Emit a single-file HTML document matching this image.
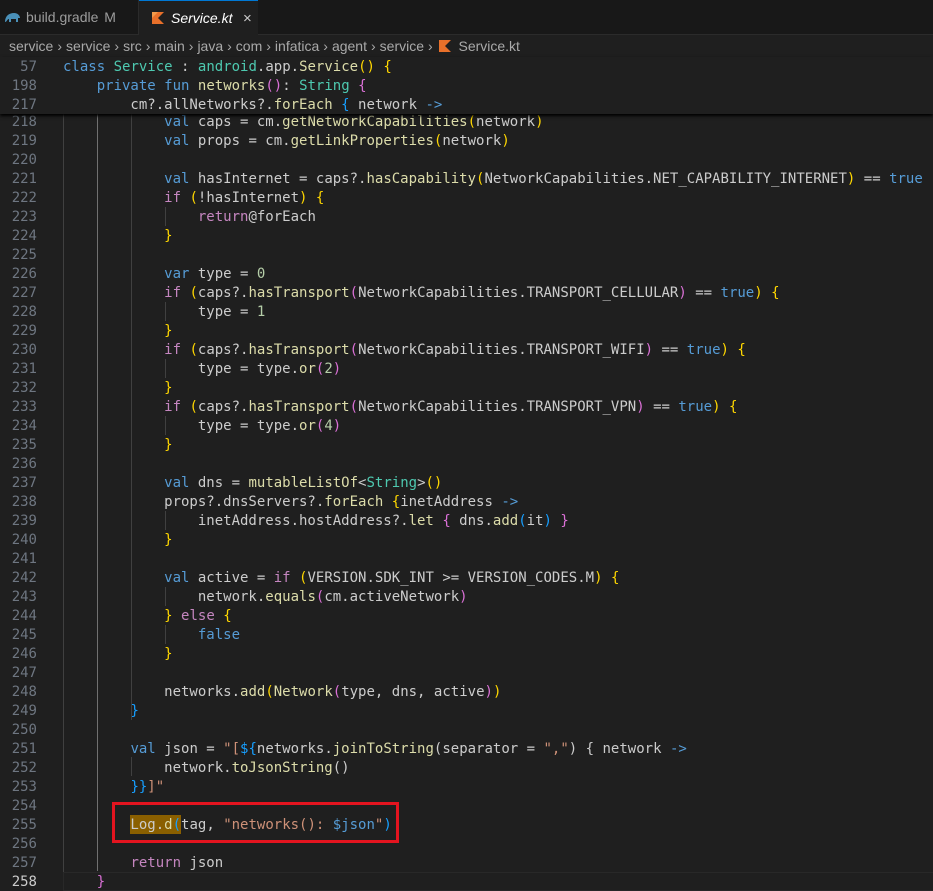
<!DOCTYPE html>
<html><head><meta charset="utf-8"><style>
*{margin:0;padding:0;box-sizing:border-box}
html,body{width:933px;height:891px;overflow:hidden;background:#1f1f1f}
body{position:relative;font-family:"DejaVu Sans Mono","Liberation Mono",monospace;font-size:14px;color:#cccccc}
.tabs{position:absolute;left:0;top:0;width:933px;height:35px;background:#181818;border-bottom:1px solid #2b2b2b}
.tab{position:absolute;top:0;height:35px;font-family:"Liberation Sans",sans-serif;font-size:14px;line-height:35px}
.crumb{position:absolute;left:0;top:35px;width:933px;height:22px;font-family:"Liberation Sans",sans-serif;font-size:14px;color:#a9a9a9;line-height:22px;padding-left:9px;white-space:pre}
.crumb i{font-style:normal;padding:0 4px 0 4px}
.ln{position:absolute;left:0;width:37px;text-align:right;color:#6e7681;height:20px;line-height:19px;padding-top:1px}
.cd{position:absolute;left:63px;height:20px;line-height:19px;padding-top:1px;white-space:pre}
.g{position:absolute;width:1px;background:#404040}
.k{color:#569cd6}.c{color:#c586c0}.f{color:#dcdcaa}.t{color:#4ec9b0}.s{color:#ce9178}.n{color:#b5cea8}
.y{color:#ffd700}.o{color:#da70d6}.b{color:#179fff}
</style></head><body>
<div class="tabs">
 <div class="tab" style="left:0;width:139px;color:#9d9d9d;padding-left:26px;border-right:1px solid #2b2b2b">build.gradle <span style="margin-left:2px">M</span>
  <svg style="position:absolute;left:4px;top:11px" width="17" height="13" viewBox="0 0 17 13"><path d="M1 11 C1 5 5 2 10 2 C14 2 16 5 16 7 L14 7 L14 11 L12 11 L12 8 L7 8 L7 11 L5 11 L5 8 C3 8 3 11 1 11Z" fill="#4a90b8"/></svg></div>
 <div class="tab" style="left:139px;width:119px;background:#1f1f1f;border-top:1px solid #0078d4;color:#ffffff;font-style:italic;padding-left:32px">Service.kt
  <svg style="position:absolute;left:13px;top:11px" width="12" height="12" viewBox="0 0 12 12"><path d="M0 0H12L6 6L12 12H0Z" fill="#e8702a"/><path d="M0 0H6L0 6Z" fill="#f39a4a"/></svg>
  <span style="position:absolute;left:104px;top:0;font-style:normal;color:#ccc;font-size:15px">×</span></div>
</div>
<div class="crumb">service<i>›</i>service<i>›</i>src<i>›</i>main<i>›</i>java<i>›</i>com<i>›</i>infatica<i>›</i>agent<i>›</i>service<i>›</i><svg width="12" height="12" viewBox="0 0 12 12" style="vertical-align:-1px;margin-left:2px"><path d="M0 0H12L6 6L12 12H0Z" fill="#e8702a"/></svg>  Service.kt</div>

<div class="g" style="left:63px;top:114px;height:777px"></div>
<div class="g" style="left:97px;top:114px;height:757px;background:#707070"></div>
<div class="g" style="left:131px;top:112px;height:608px"></div>
<div class="g" style="left:131px;top:757px;height:19px"></div>
<div class="g" style="left:165px;top:207px;height:19px"></div>
<div class="g" style="left:165px;top:302px;height:19px"></div>
<div class="g" style="left:165px;top:359px;height:19px"></div>
<div class="g" style="left:165px;top:416px;height:19px"></div>
<div class="g" style="left:165px;top:511px;height:19px"></div>
<div class="g" style="left:165px;top:587px;height:19px"></div>
<div class="g" style="left:165px;top:625px;height:19px"></div>

<div style="position:absolute;left:63px;top:872px;width:870px;height:19px;border:1px solid #282828;border-right:none"></div>
<div style="position:absolute;left:130px;top:815px;width:51px;height:19px;background:#8a5f00"></div>
<div style="position:absolute;left:112px;top:802px;width:287px;height:41px;border:3px solid #e3141f"></div>

<div id="code">
<div class="ln" style="top:112px">218</div><div class="cd" style="top:112px">            <span class="k">val</span> caps = cm.<span class="f">getNetworkCapabilities</span><span class="y">(</span>network<span class="y">)</span></div>
<div class="ln" style="top:131px">219</div><div class="cd" style="top:131px">            <span class="k">val</span> props = cm.<span class="f">getLinkProperties</span><span class="y">(</span>network<span class="y">)</span></div>
<div class="ln" style="top:150px">220</div>
<div class="ln" style="top:169px">221</div><div class="cd" style="top:169px">            <span class="k">val</span> hasInternet = caps?.<span class="f">hasCapability</span><span class="y">(</span>NetworkCapabilities.NET_CAPABILITY_INTERNET<span class="y">)</span> == <span class="k">true</span></div>
<div class="ln" style="top:188px">222</div><div class="cd" style="top:188px">            <span class="c">if</span> <span class="y">(</span>!hasInternet<span class="y">)</span> <span class="y">{</span></div>
<div class="ln" style="top:207px">223</div><div class="cd" style="top:207px">                <span class="c">return</span>@forEach</div>
<div class="ln" style="top:226px">224</div><div class="cd" style="top:226px">            <span class="y">}</span></div>
<div class="ln" style="top:245px">225</div>
<div class="ln" style="top:264px">226</div><div class="cd" style="top:264px">            <span class="k">var</span> type = <span class="n">0</span></div>
<div class="ln" style="top:283px">227</div><div class="cd" style="top:283px">            <span class="c">if</span> <span class="y">(</span>caps?.<span class="f">hasTransport</span><span class="o">(</span>NetworkCapabilities.TRANSPORT_CELLULAR<span class="o">)</span> == <span class="k">true</span><span class="y">)</span> <span class="y">{</span></div>
<div class="ln" style="top:302px">228</div><div class="cd" style="top:302px">                type = <span class="n">1</span></div>
<div class="ln" style="top:321px">229</div><div class="cd" style="top:321px">            <span class="y">}</span></div>
<div class="ln" style="top:340px">230</div><div class="cd" style="top:340px">            <span class="c">if</span> <span class="y">(</span>caps?.<span class="f">hasTransport</span><span class="o">(</span>NetworkCapabilities.TRANSPORT_WIFI<span class="o">)</span> == <span class="k">true</span><span class="y">)</span> <span class="y">{</span></div>
<div class="ln" style="top:359px">231</div><div class="cd" style="top:359px">                type = type.<span class="f">or</span><span class="o">(</span><span class="n">2</span><span class="o">)</span></div>
<div class="ln" style="top:378px">232</div><div class="cd" style="top:378px">            <span class="y">}</span></div>
<div class="ln" style="top:397px">233</div><div class="cd" style="top:397px">            <span class="c">if</span> <span class="y">(</span>caps?.<span class="f">hasTransport</span><span class="o">(</span>NetworkCapabilities.TRANSPORT_VPN<span class="o">)</span> == <span class="k">true</span><span class="y">)</span> <span class="y">{</span></div>
<div class="ln" style="top:416px">234</div><div class="cd" style="top:416px">                type = type.<span class="f">or</span><span class="o">(</span><span class="n">4</span><span class="o">)</span></div>
<div class="ln" style="top:435px">235</div><div class="cd" style="top:435px">            <span class="y">}</span></div>
<div class="ln" style="top:454px">236</div>
<div class="ln" style="top:473px">237</div><div class="cd" style="top:473px">            <span class="k">val</span> dns = <span class="f">mutableListOf</span>&lt;<span class="t">String</span>&gt;<span class="y">()</span></div>
<div class="ln" style="top:492px">238</div><div class="cd" style="top:492px">            props?.dnsServers?.<span class="f">forEach</span> <span class="y">{</span>inetAddress <span class="k">-&gt;</span></div>
<div class="ln" style="top:511px">239</div><div class="cd" style="top:511px">                inetAddress.hostAddress?.<span class="f">let</span> <span class="o">{</span> dns.<span class="f">add</span><span class="b">(</span>it<span class="b">)</span> <span class="o">}</span></div>
<div class="ln" style="top:530px">240</div><div class="cd" style="top:530px">            <span class="y">}</span></div>
<div class="ln" style="top:549px">241</div>
<div class="ln" style="top:568px">242</div><div class="cd" style="top:568px">            <span class="k">val</span> active = <span class="c">if</span> <span class="y">(</span>VERSION.SDK_INT &gt;= VERSION_CODES.M<span class="y">)</span> <span class="y">{</span></div>
<div class="ln" style="top:587px">243</div><div class="cd" style="top:587px">                network.<span class="f">equals</span><span class="o">(</span>cm.activeNetwork<span class="o">)</span></div>
<div class="ln" style="top:606px">244</div><div class="cd" style="top:606px">            <span class="y">}</span> <span class="c">else</span> <span class="y">{</span></div>
<div class="ln" style="top:625px">245</div><div class="cd" style="top:625px">                <span class="k">false</span></div>
<div class="ln" style="top:644px">246</div><div class="cd" style="top:644px">            <span class="y">}</span></div>
<div class="ln" style="top:663px">247</div>
<div class="ln" style="top:682px">248</div><div class="cd" style="top:682px">            networks.<span class="f">add</span><span class="y">(</span><span class="f">Network</span><span class="o">(</span>type, dns, active<span class="o">)</span><span class="y">)</span></div>
<div class="ln" style="top:701px">249</div><div class="cd" style="top:701px">        <span class="b">}</span></div>
<div class="ln" style="top:720px">250</div>
<div class="ln" style="top:739px">251</div><div class="cd" style="top:739px">        <span class="k">val</span> json = <span class="s">"[</span><span class="b">${</span>networks.<span class="f">joinToString</span>(separator = <span class="s">","</span>) { network <span class="k">-&gt;</span></div>
<div class="ln" style="top:758px">252</div><div class="cd" style="top:758px">            network.<span class="f">toJsonString</span>()</div>
<div class="ln" style="top:777px">253</div><div class="cd" style="top:777px">        <span class="b">}}</span><span class="s">]"</span></div>
<div class="ln" style="top:796px">254</div>
<div class="ln" style="top:815px">255</div><div class="cd" style="top:815px">        Log.<span class="f">d</span><span class="b">(</span>tag, <span class="s">"networks(): </span><span class="k">$json</span><span class="s">"</span><span class="b">)</span></div>
<div class="ln" style="top:834px">256</div>
<div class="ln" style="top:853px">257</div><div class="cd" style="top:853px">        <span class="c">return</span> json</div>
<div class="ln" style="top:872px;color:#cccccc">258</div><div class="cd" style="top:872px">    <span class="o">}</span></div>
</div>

<div style="position:absolute;left:0;top:57px;width:933px;height:57px;background:#1f1f1f;box-shadow:0 2px 3px #000"></div>
<div class="ln" style="top:57px">57</div><div class="cd" style="top:57px"><span class="k">class</span> <span class="t">Service</span> : <span class="t">android</span>.app.<span class="f">Service</span><span class="y">()</span> <span class="y">{</span></div>
<div class="ln" style="top:76px">198</div><div class="cd" style="top:76px">    <span class="k">private</span> <span class="k">fun</span> <span class="f">networks</span><span class="o">()</span>: <span class="t">String</span> <span class="o">{</span></div>
<div class="ln" style="top:95px">217</div><div class="cd" style="top:95px">        cm?.allNetworks?.<span class="f">forEach</span> <span class="b">{</span> network <span class="k">-&gt;</span></div>
</body></html>
